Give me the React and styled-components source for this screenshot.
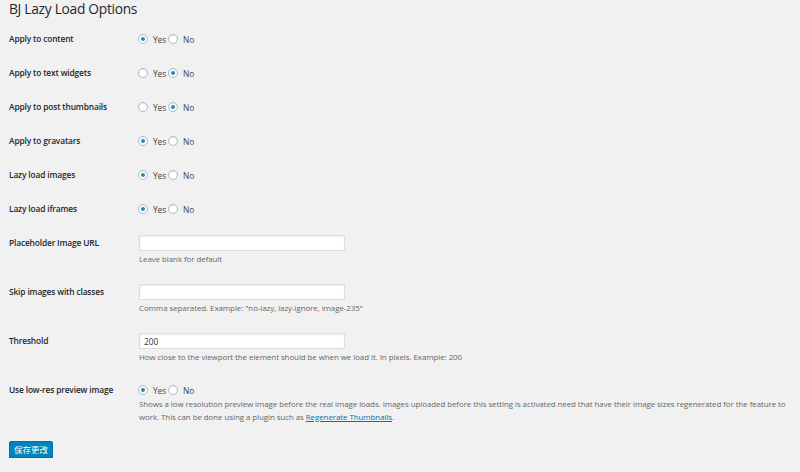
import React from "react";
import styled, { createGlobalStyle } from "styled-components";

const GlobalStyle = createGlobalStyle`
  html, body {
    margin: 0;
    padding: 0;
    background: #f1f1f1;
  }
  body {
    font-family: "Open Sans", "Noto Sans CJK SC", sans-serif;
    color: #23282d;
  }
`;

const Page = styled.div`
  padding: 0 10px 0 9px;
  width: 800px;
  box-sizing: border-box;
`;

const Title = styled.h1`
  margin: 0;
  height: 22px;
  font-size: 13.8px;
  line-height: 18px;
  letter-spacing: -0.3px;
  font-weight: 400;
  color: #23282d;
`;

const Form = styled.div`
  display: flex;
  flex-direction: column;
`;

const Row = styled.div`
  display: grid;
  grid-template-columns: 130px 1fr;
  align-items: start;
  padding: 9px 0;
`;

const Label = styled.div`
  font-size: 8.4px;
  font-weight: 600;
  line-height: 16px;
  letter-spacing: -0.15px;
  color: #23282d;
`;

const Field = styled.div`
  display: flex;
  flex-direction: column;
`;

const Choices = styled.div`
  display: flex;
  align-items: center;
  height: 16px;
  margin-left: -1px;
`;

const Choice = styled.label`
  display: flex;
  align-items: center;
  font-size: 8.4px;
  letter-spacing: -0.1px;
  color: #444;
  margin-right: 2px;
`;

const Radio = styled.span`
  box-sizing: border-box;
  width: 10px;
  height: 10px;
  border-radius: 50%;
  border: 1px solid #b4b9be;
  background: #fff;
  box-shadow: inset 0 1px 2px rgba(0, 0, 0, 0.07);
  margin-right: 5px;
  display: flex;
  align-items: center;
  justify-content: center;

  &::after {
    content: "";
    width: 4px;
    height: 4px;
    border-radius: 50%;
    background: ${({ $checked }) => ($checked ? "#1e8cbe" : "transparent")};
  }
`;

const TextInput = styled.input`
  box-sizing: border-box;
  width: 206px;
  height: 16px;
  border: 1px solid #ddd;
  background: #fff;
  box-shadow: inset 0 1px 2px rgba(0, 0, 0, 0.07);
  font-family: inherit;
  font-size: 8.4px;
  padding: 0 4px;
  color: #32373c;
  outline: none;
`;

const Description = styled.p`
  margin: ${({ $tight }) => ($tight ? "0" : "2px 0 0")};
  font-size: 7.9px;
  line-height: 13px;
  letter-spacing: -0.05px;
  color: #666;
`;

const Link = styled.a`
  color: #0073aa;
  text-decoration: underline;
`;

const SaveButton = styled.button`
  margin-top: 8px;
  height: 17px;
  padding: 0 4px;
  background: #0085ba;
  border: 1px solid #0073aa;
  border-radius: 2px;
  box-shadow: 0 1px 0 #006799;
  color: #fff;
  font-family: "Noto Sans CJK SC", sans-serif;
  font-size: 8.5px;
  line-height: 15px;
  cursor: pointer;
`;

const YesNo = ({ yes }) => (
  <Choices>
    <Choice>
      <Radio $checked={yes} />
      Yes
    </Choice>
    <Choice>
      <Radio $checked={!yes} />
      No
    </Choice>
  </Choices>
);

const radioRows = [
  ["Apply to content", true],
  ["Apply to text widgets", false],
  ["Apply to post thumbnails", false],
  ["Apply to gravatars", true],
  ["Lazy load images", true],
  ["Lazy load iframes", true],
];

const App = () => {
  return (
    <Page>
      <GlobalStyle />
      <Title>BJ Lazy Load Options</Title>
      <Form>
        {radioRows.map(([label, yes]) => (
          <Row key={label}>
            <Label>{label}</Label>
            <Field>
              <YesNo yes={yes} />
            </Field>
          </Row>
        ))}

        <Row>
          <Label>Placeholder Image URL</Label>
          <Field>
            <TextInput type="text" defaultValue="" />
            <Description>Leave blank for default</Description>
          </Field>
        </Row>

        <Row>
          <Label>Skip images with classes</Label>
          <Field>
            <TextInput type="text" defaultValue="" />
            <Description>
              Comma separated. Example: "no-lazy, lazy-ignore, image-235"
            </Description>
          </Field>
        </Row>

        <Row>
          <Label>Threshold</Label>
          <Field>
            <TextInput type="text" defaultValue="200" />
            <Description>
              How close to the viewport the element should be when we load it.
              In pixels. Example: 200
            </Description>
          </Field>
        </Row>

        <Row>
          <Label>Use low-res preview image</Label>
          <Field>
            <YesNo yes />
            <Description $tight>
              Shows a low resolution preview image before the real image loads.
              Images uploaded before this setting is activated need that have
              their image sizes regenerated for the feature to work. This can be
              done using a plugin such as{" "}
              <Link href="#">Regenerate Thumbnails</Link>.
            </Description>
          </Field>
        </Row>
      </Form>
      <SaveButton>保存更改</SaveButton>
    </Page>
  );
};

export default App;
